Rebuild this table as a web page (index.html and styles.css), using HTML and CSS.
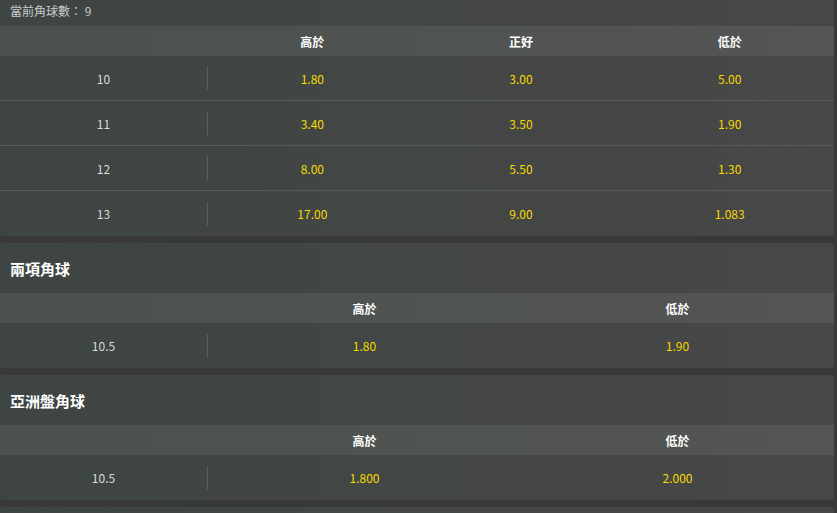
FILE: index.html
```html
<!DOCTYPE html>
<html lang="zh-Hant">
<head>
<meta charset="utf-8">
<link rel="stylesheet" href="styles.css">
</head>
<body>
<div class="page">
  <section class="card card-cut">
    <div class="info">當前角球數： 9</div>
    <div class="grid cols3 head">
      <div class="cell"></div><div class="cell">高於</div><div class="cell">正好</div><div class="cell">低於</div>
    </div>
    <div class="grid cols3 row">
      <div class="line"><span>10</span></div><div class="odd">1.80</div><div class="odd">3.00</div><div class="odd">5.00</div>
    </div>
    <div class="grid cols3 row">
      <div class="line"><span>11</span></div><div class="odd">3.40</div><div class="odd">3.50</div><div class="odd">1.90</div>
    </div>
    <div class="grid cols3 row">
      <div class="line"><span>12</span></div><div class="odd">8.00</div><div class="odd">5.50</div><div class="odd">1.30</div>
    </div>
    <div class="grid cols3 row">
      <div class="line"><span>13</span></div><div class="odd">17.00</div><div class="odd">9.00</div><div class="odd">1.083</div>
    </div>
  </section>

  <section class="card">
    <h2 class="title">兩項角球</h2>
    <div class="grid cols2 head">
      <div class="cell"></div><div class="cell">高於</div><div class="cell">低於</div>
    </div>
    <div class="grid cols2 row">
      <div class="line"><span>10.5</span></div><div class="odd">1.80</div><div class="odd">1.90</div>
    </div>
  </section>

  <section class="card">
    <h2 class="title">亞洲盤角球</h2>
    <div class="grid cols2 head">
      <div class="cell"></div><div class="cell">高於</div><div class="cell">低於</div>
    </div>
    <div class="grid cols2 row">
      <div class="line"><span>10.5</span></div><div class="odd">1.800</div><div class="odd">2.000</div>
    </div>
  </section>

  <section class="card card-next"></section>
</div>
</body>
</html>
```
FILE: styles.css
```css
* { box-sizing: border-box; }
html, body { margin: 0; padding: 0; }
body {
  background: #393939;
  font-family: "Noto Sans CJK TC", "Noto Sans", "Liberation Sans", sans-serif;
  font-size: 12px;
  color: #d6dad9;
  overflow: hidden;
}
.page {
  padding-right: 3px;
  display: flex;
  flex-direction: column;
  gap: 7px;
}
.card {
  background: linear-gradient(to right, #3e4543, #474747);
  border-radius: 4px;
  overflow: hidden;
}
.card-cut { border-radius: 0 0 4px 4px; }
.card-next { height: 50px; }
.info {
  height: 26px;
  line-height: 22px;
  padding-left: 10px;
  color: #c9cdcc;
}
.title {
  margin: 0;
  height: 50px;
  line-height: 52px;
  padding-left: 10px;
  font-size: 15px;
  font-weight: bold;
  color: #ffffff;
}
.grid { display: grid; }
.cols3 { grid-template-columns: 208px repeat(3, 1fr); }
.cols2 { grid-template-columns: 208px repeat(2, 1fr); }
.head {
  height: 30px;
  background: linear-gradient(to right, #4a514e, #545554);
  align-items: center;
  text-align: center;
  color: #ffffff;
  font-weight: bold;
}
.row {
  height: 45px;
  align-items: center;
  text-align: center;
  border-bottom: 1px solid #565b59;
}
.row:last-child { border-bottom: none; }
.line {
  height: 24px;
  border-right: 1px solid #5b605e;
  display: flex;
  align-items: center;
  justify-content: center;
  color: #d6dad9;
}
.odd { color: #f6d900; }
```
